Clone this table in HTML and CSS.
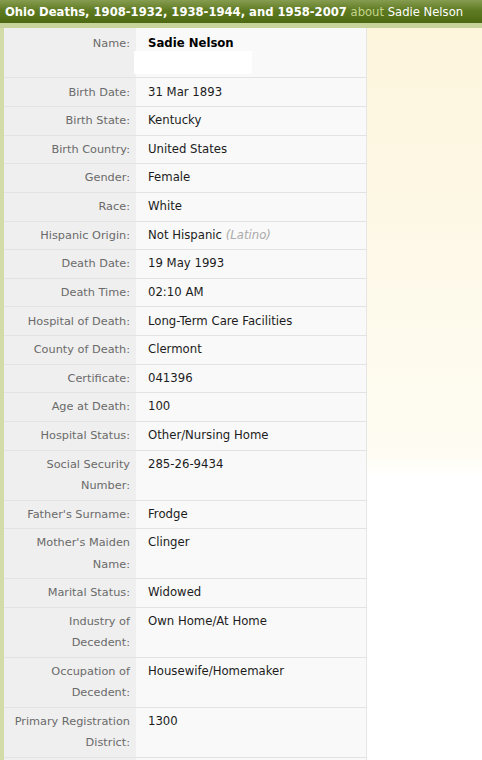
FILE: index.html
```html
<!DOCTYPE html>
<html>
<head>
<meta charset="utf-8">
<link rel="stylesheet" href="styles.css">
</head>
<body>
<div class="header"><span class="title">Ohio Deaths, 1908-1932, 1938-1944, and 1958-2007</span> <span class="about">about</span> <span class="who">Sadie Nelson</span></div>
<div class="main">
  <table class="record">
    <tr class="name-row"><th>Name:</th><td><b class="person">Sadie Nelson</b><div class="redact"></div></td></tr>
    <tr><th>Birth Date:</th><td>31 Mar 1893</td></tr>
    <tr><th>Birth State:</th><td>Kentucky</td></tr>
    <tr><th>Birth Country:</th><td>United States</td></tr>
    <tr><th>Gender:</th><td>Female</td></tr>
    <tr><th>Race:</th><td>White</td></tr>
    <tr><th>Hispanic Origin:</th><td>Not Hispanic <i class="note">(Latino)</i></td></tr>
    <tr><th>Death Date:</th><td>19 May 1993</td></tr>
    <tr><th>Death Time:</th><td>02:10 AM</td></tr>
    <tr><th>Hospital of Death:</th><td>Long-Term Care Facilities</td></tr>
    <tr><th>County of Death:</th><td>Clermont</td></tr>
    <tr><th>Certificate:</th><td>041396</td></tr>
    <tr><th>Age at Death:</th><td>100</td></tr>
    <tr><th>Hospital Status:</th><td>Other/Nursing Home</td></tr>
    <tr><th>Social Security Number:</th><td>285-26-9434</td></tr>
    <tr><th>Father's Surname:</th><td>Frodge</td></tr>
    <tr><th>Mother's Maiden Name:</th><td>Clinger</td></tr>
    <tr><th>Marital Status:</th><td>Widowed</td></tr>
    <tr><th>Industry of Decedent:</th><td>Own Home/At Home</td></tr>
    <tr><th>Occupation of Decedent:</th><td>Housewife/Homemaker</td></tr>
    <tr><th>Primary Registration District:</th><td>1300</td></tr>
    <tr class="filler"><th></th><td></td></tr>
  </table>
  <div class="side"></div>
</div>
</body>
</html>
```
FILE: styles.css
```css
html, body {
  margin: 0;
  padding: 0;
  background: #fff;
  font-family: "DejaVu Sans", Verdana, sans-serif;
}
.header {
  height: 23px;
  line-height: 25px;
  padding-left: 5px;
  font-size: 11.6px;
  color: #fff;
  white-space: nowrap;
  background: linear-gradient(#869c50, #5f7b22 45%, #4c6912);
  border-bottom: 5px solid #c7d39a;
}
.title { font-weight: bold; }
.about { color: #c5d58c; }
.main {
  display: flex;
  align-items: flex-start;
  border-left: 4px solid #d3dba9;
  background: linear-gradient(#fdf5dc, #fefcf3 428px, #fff 450px);
  height: 732px;
  overflow: hidden;
}
.record {
  border-collapse: collapse;
  width: 363px;
  flex: none;
  font-size: 11.3px;
  line-height: 21.4px;
  border-right: 1px solid #e6e6e6;
}
.record th, .record td {
  padding: 3.12px 0;
  border-bottom: 1px solid #e3e3e3;
  vertical-align: top;
}
.record th {
  width: 118px;
  padding-left: 8px;
  padding-right: 6px;
  text-align: right;
  font-weight: normal;
  color: #6a6a6a;
  background: #efefef;
}
.record td {
  padding-left: 12px;
  font-size: 11.7px;
  color: #1c1c1c;
  background: #f9f9f9;
}
.person { color: #000; }
.note { color: #aaa; }
.redact {
  width: 118px;
  height: 23px;
  margin: -3px 0 0 -14px;
  background: #fff;
}
.name-row th, .name-row td { padding-top: 5px; padding-bottom: 3px; }
.filler th, .filler td { height: 20px; border-bottom: none; }
.side { flex: 1; }
```
